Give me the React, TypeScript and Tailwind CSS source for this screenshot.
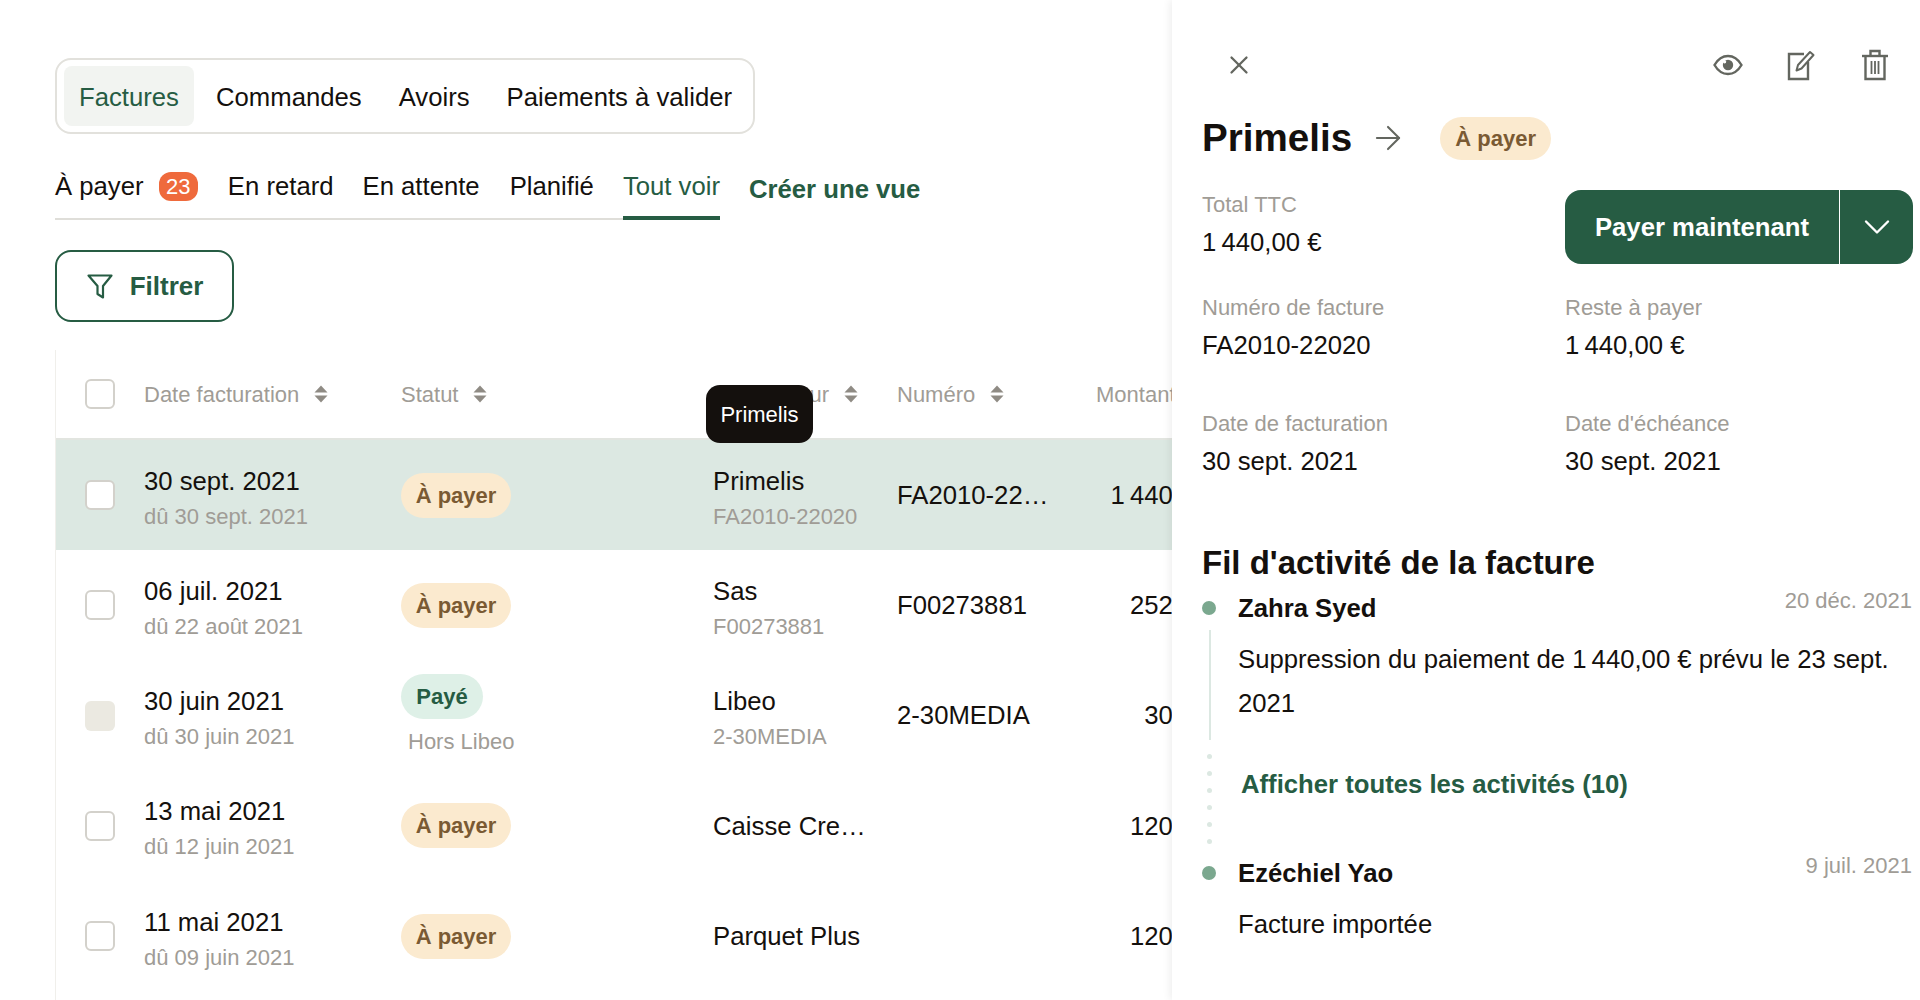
import { ArrowRight, ChevronDown, X } from 'lucide-react'

type Row = {
  date: string
  due: string
  status: 'pay' | 'paid'
  supplier: string
  ref?: string
  number?: string
  amount: string
  selected?: boolean
  disabled?: boolean
}

const ROWS: Row[] = [
  { date: '30 sept. 2021', due: 'dû 30 sept. 2021', status: 'pay', supplier: 'Primelis', ref: 'FA2010-22020', number: 'FA2010-22020', amount: '1\u202f440,00 €', selected: true },
  { date: '06 juil. 2021', due: 'dû 22 août 2021', status: 'pay', supplier: 'Sas', ref: 'F00273881', number: 'F00273881', amount: '252,00 €' },
  { date: '30 juin 2021', due: 'dû 30 juin 2021', status: 'paid', supplier: 'Libeo', ref: '2-30MEDIA', number: '2-30MEDIA', amount: '30,00 €', disabled: true },
  { date: '13 mai 2021', due: 'dû 12 juin 2021', status: 'pay', supplier: 'Caisse Credit Agricole', amount: '120,00 €' },
  { date: '11 mai 2021', due: 'dû 09 juin 2021', status: 'pay', supplier: 'Parquet Plus', amount: '120,00 €' },
]

const COLS = 'grid grid-cols-[88px_257px_312px_184px_199px_134px]'

function SortIcon() {
  return (
    <svg width="14" height="18" viewBox="0 0 14 18" className="shrink-0 text-[#8f8b84]" fill="currentColor">
      <path d="M7 0.5 13.5 7.5H0.5Z" />
      <path d="M7 17.5 13.5 10.5H0.5Z" />
    </svg>
  )
}

function HeaderCell({ label, className = '' }: { label: string; className?: string }) {
  return (
    <div className={`flex items-center gap-[15px] whitespace-nowrap ${className}`}>
      <span>{label}</span>
      <SortIcon />
    </div>
  )
}

function Checkbox({ disabled, filled }: { disabled?: boolean; filled?: boolean }) {
  if (disabled) return <div className="h-[30px] w-[30px] rounded-[6px] bg-[#ebe9e1]" />
  return <div className={`h-[30px] w-[30px] rounded-[6px] border-2 border-[#d3d1cb] ${filled ? 'bg-white' : ''}`} />
}

function ToPayBadge() {
  return (
    <span className="inline-flex h-[45px] w-[110px] items-center justify-center rounded-full bg-[#fbeacf] text-[22px] font-bold text-[#7a5a33]">
      À payer
    </span>
  )
}

function FunnelIcon() {
  return (
    <svg width="28" height="28" viewBox="0 0 28 28" fill="none" stroke="#265c43" strokeWidth="2.2" strokeLinejoin="round">
      <path d="M2.5 3.5H25.5L17 14V25.5L11.5 22V14Z" />
    </svg>
  )
}

function EyeIcon() {
  return (
    <svg width="30" height="22" viewBox="0 0 30 22" fill="none" stroke="#63665f" strokeWidth="2.4">
      <path d="M1.5 11C5 5 9.5 2 15 2s10 3 13.5 9C25 17 20.5 20 15 20S5 17 1.5 11Z" />
      <circle cx="15" cy="11" r="5.2" fill="#63665f" stroke="none" />
      <circle cx="11.6" cy="7.8" r="1.6" fill="#ffffff" stroke="none" />
    </svg>
  )
}

function EditIcon() {
  return (
    <svg width="28" height="32" viewBox="0 0 28 32" fill="none" stroke="#63665f" strokeWidth="2.4">
      <path d="M17 5H2V30H21V13" />
      <path d="M9.5 21.5 11 16 23 3 26.5 6 14.5 19.5Z" strokeWidth="2" strokeLinejoin="round" />
    </svg>
  )
}

function TrashIcon() {
  return (
    <svg width="28" height="32" viewBox="0 0 28 32" fill="none" stroke="#63665f" strokeWidth="2.4">
      <path d="M1 7H27" />
      <path d="M9.5 7V2H18.5V7" />
      <path d="M4.5 7V30H23.5V7" />
      <path d="M10.5 12V25M14 12V25M17.5 12V25" strokeWidth="1.8" />
    </svg>
  )
}

function Field({ label, value }: { label: string; value: string }) {
  return (
    <div>
      <p className="text-[22px] leading-[32px] text-[#a09c96]">{label}</p>
      <p className="mt-[3px] text-[25.7px] leading-[36px] text-[#14100d]">{value}</p>
    </div>
  )
}

export default function App() {
  return (
    <div className="flex h-[1000px] overflow-hidden bg-white font-['Liberation_Sans',sans-serif] text-[#14100d]">
      {/* colonne liste */}
      <div className="w-[1172px] shrink-0 overflow-hidden pl-[55px] pt-[58px]">
        <div className="flex h-[76px] w-[700px] items-center rounded-[16px] border-2 border-[#e2e1dc] pl-[7px] text-[25.7px]">
          <div className="flex h-[60px] w-[130px] items-center justify-center rounded-[8px] bg-[#f2f4f1] pt-[2px] text-[#265c43]">Factures</div>
          <span className="ml-[22px] pt-[2px]">Commandes</span>
          <span className="ml-[37px] pt-[2px]">Avoirs</span>
          <span className="ml-[37px] pt-[2px]">Paiements à valider</span>
        </div>

        <div className="relative mt-[26px] h-[60px] text-[25.7px]">
          <div className="flex h-[60px] w-[665px] items-center border-b-2 border-[#dfded9] pb-[6px] whitespace-nowrap">
            <span>À payer</span>
            <span className="ml-[15px] flex h-[29px] w-[40px] items-center justify-center rounded-[12px] bg-[#ef6a3c] text-[22px] text-white">23</span>
            <span className="ml-[30px]">En retard</span>
            <span className="ml-[29px]">En attente</span>
            <span className="ml-[30px]">Planifié</span>
            <span className="ml-[29px] text-[#265c43]">Tout voir</span>
          </div>
          <div className="absolute top-[56px] left-[568px] h-[4px] w-[97px] bg-[#265c43]" />
          <span className="absolute top-[10px] left-[694px] whitespace-nowrap font-bold text-[#265c43]">Créer une vue</span>
        </div>

        <button className="mt-[30px] flex h-[72px] w-[179px] items-center justify-center gap-[16px] rounded-[16px] border-2 border-[#265c43] text-[26px] font-bold text-[#265c43]">
          <FunnelIcon />
          Filtrer
        </button>

        <div className="relative mt-[28px] h-[700px] w-[1200px] border-l border-[#f0efeb]">
          <div className={`${COLS} h-[90px] items-center border-b-2 border-[#e2e5e0] text-[22px] text-[#a09c96]`}>
            <div className="pl-[29px]"><Checkbox /></div>
            <HeaderCell label="Date facturation" />
            <HeaderCell label="Statut" />
            <HeaderCell label="Fournisseur" />
            <HeaderCell label="Numéro" />
            <div className="whitespace-nowrap">Montant TTC</div>
          </div>
          <div className="absolute top-[35px] left-[650px] flex h-[58px] w-[107px] items-center justify-center rounded-[14px] bg-[#14100d] text-[22px] text-white">Primelis</div>

          {ROWS.map((r) => (
            <div key={r.date} className={`${COLS} h-[110.25px] items-center text-[25.7px] ${r.selected ? 'bg-[#dce8e2]' : ''}`}>
              <div className="pl-[29px]"><Checkbox disabled={r.disabled} filled={r.selected} /></div>
              <div className="pt-[6px]">
                <p className="leading-[36px]">{r.date}</p>
                <p className="text-[22px] leading-[35px] text-[#a09c96]">{r.due}</p>
              </div>
              <div>
                {r.status === 'pay' ? (
                  <ToPayBadge />
                ) : (
                  <div className="pt-[2px]">
                    <span className="inline-flex h-[45px] w-[82px] items-center justify-center rounded-full bg-[#def0e7] text-[22px] font-bold text-[#265c43]">Payé</span>
                    <p className="mt-[6px] pl-[7px] text-[22px] leading-[34px] text-[#a09c96]">Hors Libeo</p>
                  </div>
                )}
              </div>
              <div className={`pr-[29px] ${r.ref ? 'pt-[6px]' : ''}`}>
                <p className="truncate leading-[36px]">{r.supplier}</p>
                {r.ref && <p className="text-[22px] leading-[35px] whitespace-nowrap text-[#a09c96]">{r.ref}</p>}
              </div>
              <div className="pr-[46px]">
                {r.number && <p className="truncate">{r.number}</p>}
              </div>
              <div className="text-right whitespace-nowrap">{r.amount}</div>
            </div>
          ))}
        </div>
      </div>

      {/* panneau facture */}
      <div className="z-10 w-[748px] shrink-0 overflow-hidden bg-white pr-[8px] pl-[30px] shadow-[-2px_0_8px_rgba(0,0,0,0.07)]">
        <div className="flex h-[108px] items-center justify-between pt-[22px] pr-[23px] pl-[22px]">
          <X size={30} strokeWidth={1.8} color="#63665f" />
          <div className="flex items-center">
            <div className="mr-[44px]"><EyeIcon /></div>
            <div className="mr-[46px]"><EditIcon /></div>
            <TrashIcon />
          </div>
        </div>

        <div className="flex h-[60px] items-center">
          <h1 className="text-[38.6px] leading-none font-bold">Primelis</h1>
          <ArrowRight size={38} strokeWidth={1.3} color="#63665f" className="ml-[17px]" />
          <span className="ml-[33px] inline-flex h-[43px] w-[111px] items-center justify-center rounded-full bg-[#fbeacf] text-[22px] font-bold text-[#7a5a33]">À payer</span>
        </div>

        <div className="mt-[21px] grid grid-cols-[363px_348px]">
          <Field label="Total TTC" value={'1\u202f440,00 €'} />
          <div className="mt-[1px] flex h-[74px] items-stretch overflow-hidden rounded-[16px] bg-[#265c43] text-white">
            <div className="flex w-[275px] items-center justify-center border-r border-white text-[25.7px] font-bold">Payer maintenant</div>
            <div className="flex flex-1 items-center justify-center"><ChevronDown size={44} strokeWidth={1.3} /></div>
          </div>
        </div>

        <div className="mt-[28px] grid grid-cols-[363px_348px] gap-y-[45px]">
          <Field label="Numéro de facture" value="FA2010-22020" />
          <Field label="Reste à payer" value={'1\u202f440,00 €'} />
          <Field label="Date de facturation" value="30 sept. 2021" />
          <Field label="Date d'échéance" value="30 sept. 2021" />
        </div>

        <h2 className="mt-[62px] text-[33px] leading-[44px] font-bold">Fil d'activité de la facture</h2>

        <div className="mt-[6px] flex h-[34px] items-center">
          <div className="h-[14px] w-[14px] rounded-full bg-[#7ba88f]" />
          <span className="ml-[22px] text-[25.7px] font-bold">Zahra Syed</span>
          <span className="mb-[16px] ml-auto text-[22px] text-[#a09c96]">20 déc. 2021</span>
        </div>
        <div className="mt-[5px] flex h-[110px]">
          <div className="ml-[7px] w-[2px] shrink-0 bg-[#dce8e2]" />
          <p className="ml-[27px] pt-[7px] text-[25.7px] leading-[44px]">Suppression du paiement de 1{'\u202f'}440,00 € prévu le 23 sept. 2021</p>
        </div>
        <div className="mt-[14px] flex h-[92px]">
          <div className="ml-[5px] flex w-[5px] shrink-0 flex-col gap-[12px]">
            {[0, 1, 2, 3, 4, 5].map((i) => (
              <div key={i} className="h-[5px] w-[5px] rounded-full bg-[#dce8e2]" />
            ))}
          </div>
          <a className="mt-[14px] ml-[29px] text-[25.7px] leading-[32px] font-bold text-[#265c43]">Afficher toutes les activités (10)</a>
        </div>
        <div className="mt-[10px] flex h-[34px] items-center">
          <div className="h-[14px] w-[14px] rounded-full bg-[#7ba88f]" />
          <span className="ml-[22px] text-[25.7px] font-bold">Ezéchiel Yao</span>
          <span className="mb-[16px] ml-auto text-[22px] text-[#a09c96]">9 juil. 2021</span>
        </div>
        <p className="mt-[16px] pl-[36px] text-[25.7px] leading-[36px]">Facture importée</p>
      </div>
    </div>
  )
}
